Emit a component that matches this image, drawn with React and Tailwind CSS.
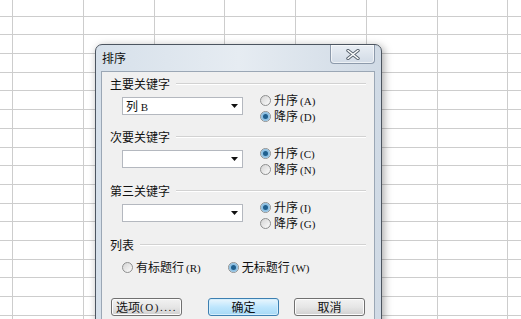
const ROW_H = [
  'h-[17px]', 'h-[18px]', 'h-[19px]', 'h-[19px]', 'h-[18px]', 'h-[19px]', 'h-[19px]', 'h-[19px]', 'h-[18px]',
  'h-[19px]', 'h-[19px]', 'h-[18px]', 'h-[19px]', 'h-[19px]', 'h-[18px]', 'h-[19px]', 'h-[19px]', 'h-[19px]',
]
const COL_W = ['w-[13px]', 'w-[71px]', 'w-[71px]', 'w-[70px]', 'w-[71px]', 'w-[71px]', 'w-[71px]', 'w-[70px]']

const cjk = "font-['Noto_Sans_CJK_SC',sans-serif]"
const latin = "font-['Liberation_Serif','Noto_Sans_CJK_SC',serif]"

function Sheet() {
  return (
    <div className="flex flex-col">
      {ROW_H.map((h, r) => (
        <div key={r} className={`flex ${h}`}>
          {COL_W.map((w, c) => (
            <div key={c} className={`${w} shrink-0 border-b border-r border-[#cdcdcd]`} />
          ))}
          <div className="flex-1 border-b border-[#cdcdcd]" />
        </div>
      ))}
    </div>
  )
}

function Radio({ checked }) {
  return (
    <span className="flex h-[11px] w-[11px] shrink-0 items-center justify-center rounded-full border border-[#8e8f8f] bg-gradient-to-br from-[#d4d4d4] to-[#fcfcfc]">
      {checked && <span className="h-[5px] w-[5px] rounded-full bg-[#1f5f8e] ring-2 ring-[#8fc0e2]" />}
    </span>
  )
}

function RadioLabel({ checked, text, hot }) {
  return (
    <span className="flex h-[16px] items-center gap-[3px]">
      <Radio checked={checked} />
      <span className="text-[12px] leading-[16px] text-[#111]">
        {text}
        <span className={`${latin} ml-[2px] text-[11px]`}>({hot})</span>
      </span>
    </span>
  )
}

function GroupLabel({ text }) {
  return (
    <div className="flex h-[14px] items-center gap-[6px]">
      <span className="text-[12px] leading-[14px] text-[#111]">{text}</span>
      <span className="h-[2px] flex-1 border-t border-b border-t-[#d2d2d2] border-b-white" />
    </div>
  )
}

function Combo({ value }) {
  return (
    <div className="mt-[5px] flex h-[18px] w-[121px] items-center justify-between border border-[#b4b8bf] bg-white pl-[3px] pr-[4px]">
      <span className="text-[12px] leading-[16px] text-[#111]">
        {value && (
          <>
            列 <span className={`${latin} text-[11px]`}>B</span>
          </>
        )}
      </span>
      <svg width="7" height="4" viewBox="0 0 7 4">
        <path d="M0 0H7L3.5 4Z" fill="#111" />
      </svg>
    </div>
  )
}

function KeySection({ title, value, first, keys, className }) {
  return (
    <div className={className}>
      <GroupLabel text={title} />
      <div className="mt-[1px] flex items-start pl-[12px]">
        <Combo value={value} />
        <div className="ml-[17px] flex flex-col">
          <RadioLabel checked={first === 0} text="升序" hot={keys[0]} />
          <RadioLabel checked={first === 1} text="降序" hot={keys[1]} />
        </div>
      </div>
    </div>
  )
}

function Button({ children, primary, className }) {
  return (
    <div
      className={`flex h-[18px] w-[71px] items-center justify-center rounded-[3px] border text-[12px] leading-[16px] text-[#111] ${
        primary
          ? 'border-[#3c7fb1] bg-gradient-to-b from-[#eaf6fd] via-[#bee6fd] to-[#a7d9f5] shadow-[inset_0_0_0_1px_#d4eefc]'
          : 'border-[#707070] bg-gradient-to-b from-[#f2f2f2] via-[#e6e6e6] to-[#d0d0d0] shadow-[inset_0_0_0_1px_#fcfcfc]'
      } ${className}`}
    >
      {children}
    </div>
  )
}

function SortDialog() {
  return (
    <div className={`absolute left-[95px] top-[44px] flex h-[290px] w-[287px] flex-col rounded-t-[7px] border border-[#4c5560] bg-gradient-to-r from-[#d6e0ea] via-[#e6ecf2] to-[#d0dae5] shadow-[2px_2px_8px_rgba(0,0,0,0.35)] ${cjk}`}>
      <div className="relative flex h-[26px] shrink-0 items-center pl-[6px]">
        <span className="text-[12px] leading-[14px] text-[#111]">排序</span>
        <div className="absolute right-[6px] top-0 flex h-[19px] w-[45px] items-center justify-center rounded-b-[4px] border border-t-0 border-[#8d9aab] bg-gradient-to-b from-[#e9eef4] to-[#d2dbe6] shadow-[inset_0_0_0_1px_rgba(255,255,255,0.6)]">
          <svg width="14" height="11" viewBox="0 0 14 11">
            <path d="M2 1.5L12 9.5M12 1.5L2 9.5" stroke="#55606c" strokeWidth="3.4" strokeLinecap="round" />
            <path d="M2 1.5L12 9.5M12 1.5L2 9.5" stroke="#ffffff" strokeWidth="1.6" strokeLinecap="round" />
          </svg>
        </div>
      </div>
      <div className="ml-[5px] mr-[6px] flex flex-1 flex-col border border-[#9ba7b5] bg-[#f0f0f0] px-[8px] pt-[5px]">
        <KeySection title="主要关键字" value first={1} keys={['A', 'D']} />
        <KeySection title="次要关键字" first={0} keys={['C', 'N']} className="mt-[6px]" />
        <KeySection title="第三关键字" first={0} keys={['I', 'G']} className="mt-[7px]" />
        <div className="mt-[7px]">
          <GroupLabel text="列表" />
          <div className="mt-[7px] flex items-center pl-[12px]">
            <RadioLabel text="有标题行" hot="R" />
            <span className="ml-[27px]">
              <RadioLabel checked text="无标题行" hot="W" />
            </span>
          </div>
        </div>
        <div className="mt-[23px] flex pl-[1px]">
          <Button>
            选项<span className={`${latin} text-[11px] tracking-[1.5px]`}>(O)....</span>
          </Button>
          <Button primary className="ml-[26px]">确定</Button>
          <Button className="ml-[15px]">取消</Button>
        </div>
      </div>
    </div>
  )
}

export default function App() {
  return (
    <div className="relative h-[319px] w-[521px] overflow-hidden bg-white">
      <Sheet />
      <SortDialog />
    </div>
  )
}
